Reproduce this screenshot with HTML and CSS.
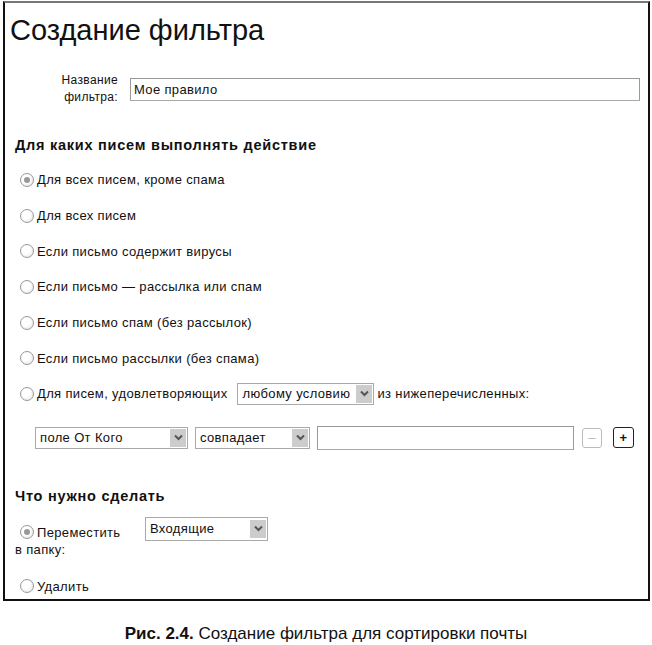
FILE: index.html
```html
<!DOCTYPE html>
<html lang="ru">
<head>
  <meta charset="UTF-8" />
  <title>Создание фильтра</title>
  <link rel="stylesheet" href="styles.css">
</head>
<body>
  <div class="frame">
    <h1>Создание фильтра</h1>

    <div class="name-row">
      <label class="name-label">Название<br>фильтра:</label>
      <div class="text-field">Мое правило</div>
    </div>

    <h2>Для каких писем выполнять действие</h2>
    <ul class="options">
      <li><span class="radio checked"></span>Для всех писем, кроме спама</li>
      <li><span class="radio"></span>Для всех писем</li>
      <li><span class="radio"></span>Если письмо содержит вирусы</li>
      <li><span class="radio"></span>Если письмо — рассылка или спам</li>
      <li><span class="radio"></span>Если письмо спам (без рассылок)</li>
      <li><span class="radio"></span>Если письмо рассылки (без спама)</li>
      <li class="cond">
        <span class="radio"></span>Для писем, удовлетворяющих
        <div class="select sel-any"><span>любому условию</span><i class="arrow"><svg width="9" height="7" viewBox="0 0 9 7"><path d="M1 1.5l3.5 3.5 3.5-3.5" fill="none" stroke="#555" stroke-width="2"/></svg></i></div>
        из нижеперечисленных:
      </li>
    </ul>

    <div class="rule-row">
      <div class="select sel-field"><span>поле От Кого</span><i class="arrow"><svg width="9" height="7" viewBox="0 0 9 7"><path d="M1 1.5l3.5 3.5 3.5-3.5" fill="none" stroke="#555" stroke-width="2"/></svg></i></div>
      <div class="select sel-match"><span>совпадает</span><i class="arrow"><svg width="9" height="7" viewBox="0 0 9 7"><path d="M1 1.5l3.5 3.5 3.5-3.5" fill="none" stroke="#555" stroke-width="2"/></svg></i></div>
      <div class="text-field rule-value"></div>
      <span class="btn disabled">–</span>
      <span class="btn">+</span>
    </div>

    <h2 class="actions-title">Что нужно сделать</h2>
    <div class="move-row">
      <div class="move-label"><span class="radio checked"></span>Переместить<br><span class="sub">в папку:</span></div>
      <div class="select sel-folder"><span>Входящие</span><i class="arrow"><svg width="9" height="7" viewBox="0 0 9 7"><path d="M1 1.5l3.5 3.5 3.5-3.5" fill="none" stroke="#555" stroke-width="2"/></svg></i></div>
    </div>
    <div class="delete-row"><span class="radio"></span>Удалить</div>
  </div>

  <p class="caption"><b>Рис. 2.4.</b> Создание фильтра для сортировки почты</p>
</body>
</html>
```

FILE: styles.css
```css
body {
  margin: 0;
  font-family: "Liberation Sans", Arial, sans-serif;
  font-size: 13px;
  letter-spacing: 0.35px;
  color: #111;
  background: #fff;
}
.frame {
  margin: 1px 0 0 3px;
  width: 647px;
  height: 600px;
  border: 2px solid #111;
  border-top-color: #777;
  box-sizing: border-box;
}
h1 {
  margin: 0;
  padding: 12px 0 0 5px;
  font-size: 29px;
  font-weight: normal;
  line-height: 30px;
  letter-spacing: 0;
}
.name-row {
  display: flex;
  align-items: center;
  margin-top: 27px;
}
.name-label {
  width: 113px;
  text-align: right;
  font-size: 12px;
  line-height: 17px;
}
.text-field {
  height: 23px;
  box-sizing: border-box;
  border: 1px solid #999;
  border-bottom-color: #aaa;
  padding: 3px 3px;
  line-height: 15px;
}
.name-row .text-field {
  margin-left: 12px;
  width: 510px;
}
h2 {
  margin: 29px 0 0 10px;
  font-size: 14.5px;
  font-weight: bold;
  line-height: 20px;
  letter-spacing: 0.75px;
}
.options {
  list-style: none;
  margin: 7px 0 0 15px;
  padding: 0;
}
.options li {
  display: flex;
  align-items: center;
  height: 35.7px;
}
.radio {
  display: inline-block;
  width: 14px;
  height: 14px;
  box-sizing: border-box;
  border: 1px solid #999;
  border-radius: 50%;
  background: radial-gradient(circle at 40% 40%, #fff 40%, #ddd 100%);
  margin-right: 3px;
  position: relative;
  flex: none;
}
.radio.checked::after {
  content: "";
  position: absolute;
  left: 3px;
  top: 3px;
  width: 6px;
  height: 6px;
  border-radius: 50%;
  background: #999;
}
.select {
  display: flex;
  align-items: center;
  justify-content: space-between;
  height: 22px;
  box-sizing: border-box;
  border: 1px solid #aaa;
  padding: 0 1px 0 4px;
  background: #fff;
}
.arrow {
  display: flex;
  align-items: center;
  justify-content: center;
  width: 16px;
  height: 18px;
  background: #ccc;
}
.cond .sel-any {
  width: 137px;
  margin: 0 3px 0 10px;
}
.rule-row {
  display: flex;
  align-items: center;
  gap: 7px;
  margin: 14px 0 0 30px;
}
.sel-field { width: 153px; }
.sel-match { width: 115px; }
.rule-value {
  width: 257px;
  height: 24px;
}
.btn {
  width: 21px;
  height: 21px;
  box-sizing: border-box;
  border: 1px solid #222;
  border-radius: 3px;
  display: flex;
  align-items: center;
  justify-content: center;
  font-weight: bold;
  font-size: 13px;
  margin-left: 1px;
}
.btn.disabled {
  width: 20px;
  height: 20px;
  border-color: #bbb;
  color: #bbb;
  font-weight: normal;
  margin-left: 1px;
  margin-right: 3px;
}
.actions-title {
  margin-top: 36px;
}
.move-row {
  display: flex;
  align-items: flex-start;
  margin: 11px 0 0 15px;
}
.move-label {
  width: 125px;
  line-height: 17px;
  padding-top: 7px;
}
.move-label .sub {
  margin-left: -5px;
}
.move-label .radio {
  vertical-align: -2px;
}
.sel-folder {
  width: 123px;
  height: 24px;
}
.delete-row {
  display: flex;
  align-items: center;
  margin: 21px 0 0 15px;
}
.caption {
  margin: 23px 0 0;
  text-align: center;
  font-size: 17px;
  letter-spacing: 0;
}
```
